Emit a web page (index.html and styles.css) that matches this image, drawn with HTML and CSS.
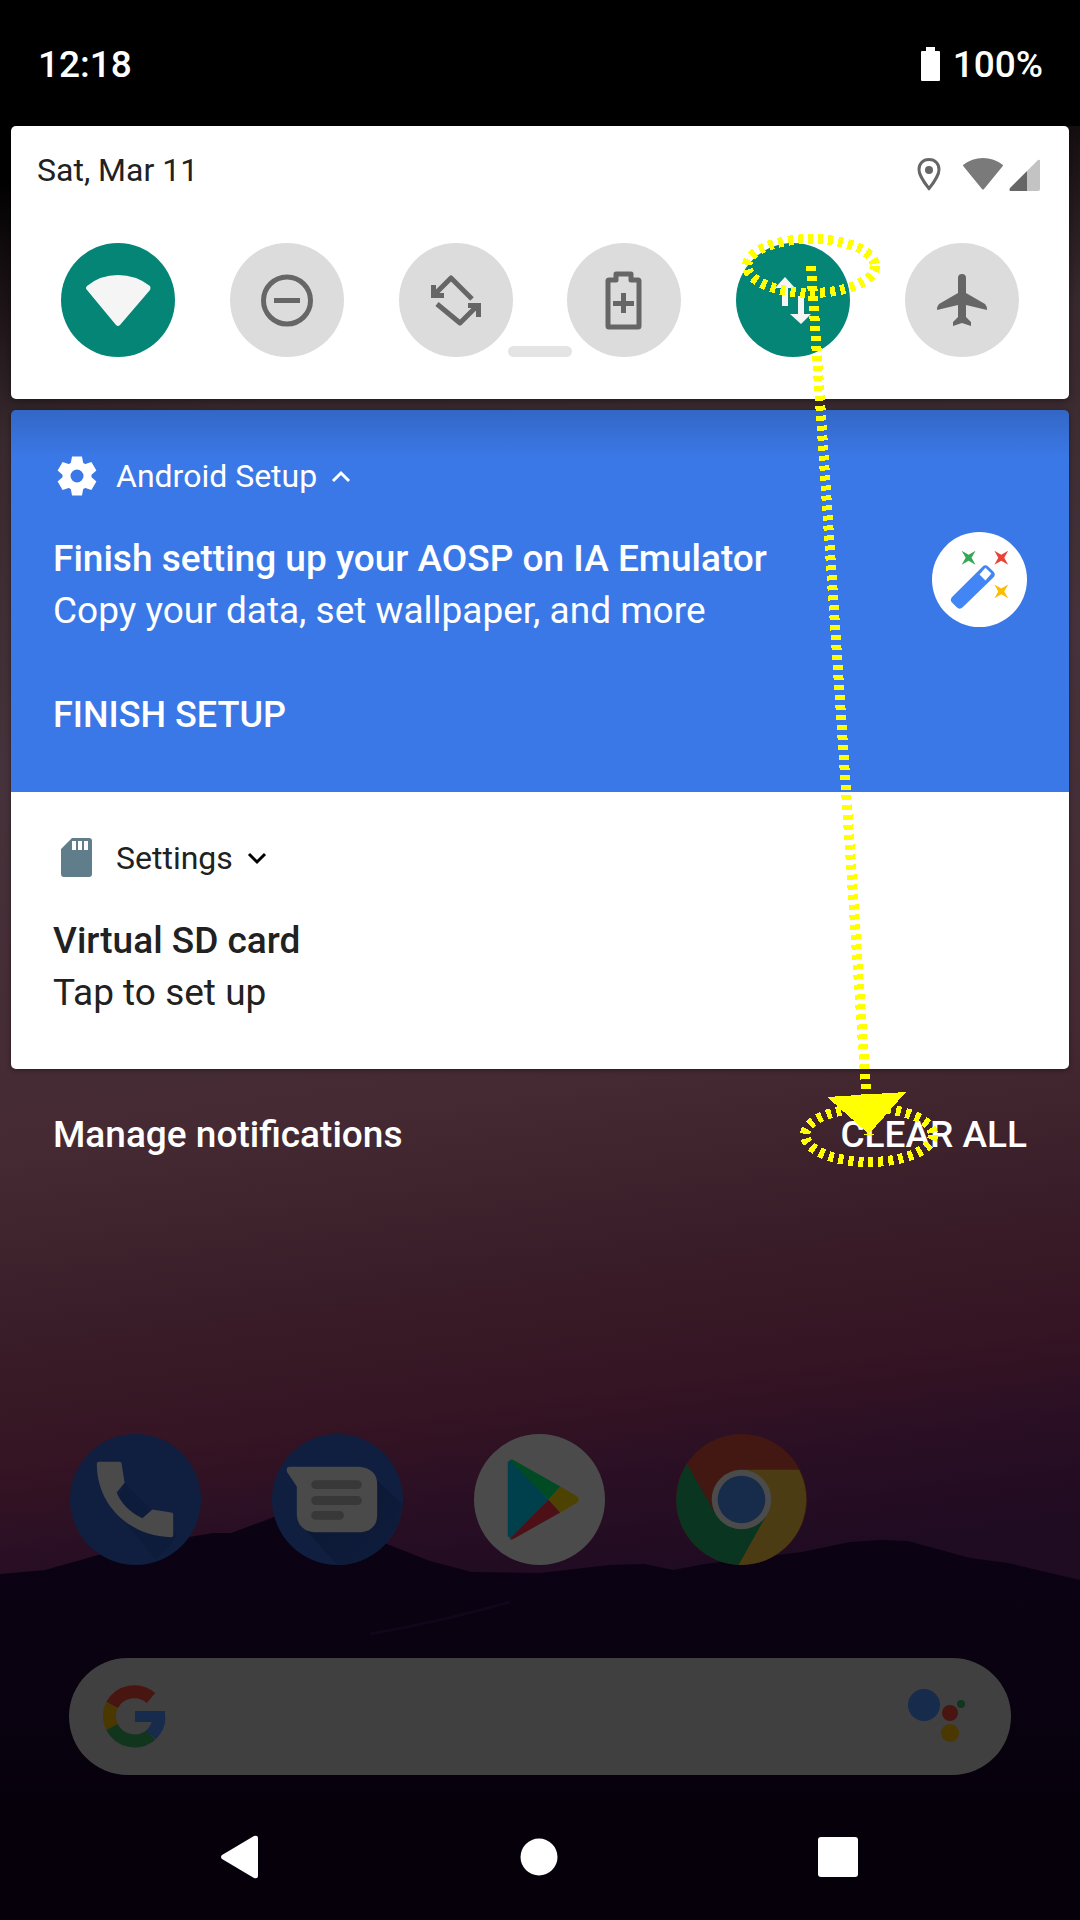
FILE: index.html
```html
<!DOCTYPE html>
<html lang="en">
<head>
<meta charset="utf-8">
<meta name="viewport" content="width=device-width, initial-scale=1">
<title>Notification shade</title>
<link rel="stylesheet" href="styles.css">
</head>
<body>
<div class="screen">
  <svg class="wallpaper" viewBox="0 0 1080 1920" preserveAspectRatio="none" aria-hidden="true">
    <defs>
      <linearGradient id="sky" gradientUnits="userSpaceOnUse" x1="350" y1="126" x2="540" y2="1590">
        <stop offset="0" stop-color="#000"/>
        <stop offset="0.08" stop-color="#1a1215"/>
        <stop offset="0.18" stop-color="#38292e"/>
        <stop offset="0.4" stop-color="#45323a"/>
        <stop offset="0.66" stop-color="#452a33"/>
        <stop offset="0.78" stop-color="#391d28"/>
        <stop offset="0.87" stop-color="#351423"/>
        <stop offset="0.93" stop-color="#2a0f24"/>
        <stop offset="1" stop-color="#1f0b22"/>
      </linearGradient>
      <linearGradient id="hill" x1="0" y1="0" x2="0" y2="1">
        <stop offset="0" stop-color="#0b0213"/>
        <stop offset="0.4" stop-color="#0a0211"/>
        <stop offset="0.75" stop-color="#06000b"/>
        <stop offset="1" stop-color="#050009"/>
      </linearGradient>
      <linearGradient id="cast" x1="0" y1="0" x2="1" y2="1">
        <stop offset="0" stop-color="#0a1732"/>
        <stop offset="1" stop-color="#0f1d3d"/>
      </linearGradient>
    </defs>
    <rect width="1080" height="1920" fill="url(#sky)"/>
    <path fill="url(#hill)" d="M0 1574L45 1570L98 1555L140 1545L189 1537L213 1533L231 1533L274 1517L310 1512L350 1526L387 1544L430 1561L472 1572L540 1573L609 1565L645 1564L673 1570L704 1564L802 1552L850 1542L880 1540L908 1541L970 1558L1008 1563L1080 1580V1920H0Z"/>
    <path fill="none" stroke="#10071a" stroke-width="3" d="M370 1634Q440 1622 510 1602"/>
  </svg>

  <header class="status">
    <time>12:18</time>
    <span class="battery">
      <svg width="20" height="34" viewBox="0 0 20 34" aria-hidden="true"><path fill="#fff" d="M5 0H14V4H18Q19 4 19 5V33Q19 34 18 34H1Q0 34 0 33V5Q0 4 1 4H5Z"/></svg>
      100%
    </span>
  </header>

  <main class="shade">
    <section class="panel" aria-label="Quick settings">
      <div class="panel-head">
        <span class="date">Sat, Mar 11</span>
        <svg class="indicators" width="126" height="36" viewBox="0 0 126 36" aria-hidden="true">
          <path fill="none" stroke="#666" stroke-width="3" d="M13 2.500C6.500 2.500 3 7 3 12.500C3 19.500 13 31.500 13 31.500S23 19.500 23 12.500C23 7 19.500 2.500 13 2.500Z"/>
          <circle cx="13" cy="13" r="4" fill="#666"/>
          <path fill="#7a7a7a" d="M47 8Q56 1 67 1T87 8Q87 9 86 10L68 32Q67 33 66 32L48 10Q47 9 47 8Z"/>
          <path fill="#c3c3c3" d="M111 14L122 3Q124 2 124 4V32Q124 34 122 34H111Z"/>
          <path fill="#666" d="M111 14V34H94Q93 33 94 31Z"/>
        </svg>
      </div>
      <div class="tiles">
        <button class="tile on" type="button" aria-label="Wi-Fi">
          <svg viewBox="0 0 114 114"><path fill="#f5f5f5" d="M26 43Q39 32 57 32T89 43Q90 45 89 47L59 82Q57 84 55 82L26 47Q24 45 26 43Z"/></svg>
        </button>
        <button class="tile" type="button" aria-label="Do not disturb">
          <svg viewBox="0 0 114 114"><circle cx="57" cy="57.500" r="23.500" fill="none" stroke="#666" stroke-width="5"/><path fill="#666" d="M44 55H70V60H44Z"/></svg>
        </button>
        <button class="tile" type="button" aria-label="Auto-rotate">
          <svg viewBox="0 0 114 114"><path fill="none" stroke="#666" stroke-width="5" stroke-linejoin="round" d="M73 56L52 35L37 50M38 61L61 80L77 64"/><path fill="#666" d="M32 42H37V47L40 50H45V55H32ZM82 74H77V68L74 65H69V60H82Z"/></svg>
        </button>
        <button class="tile" type="button" aria-label="Battery saver">
          <svg viewBox="0 0 114 114"><path fill="none" stroke="#666" stroke-width="5" stroke-linejoin="round" d="M42 37H49V31H64V37H71Q72 37 72 38V83Q72 84 71 84H42Q41 84 41 83V38Q41 37 42 37Z"/><path fill="#666" d="M54 50H59V58H67V63H59V70H54V63H46V58H54Z"/></svg>
        </button>
        <button class="tile on" type="button" aria-label="Mobile data">
          <svg viewBox="0 0 114 114"><path fill="#f5f5f5" d="M49 34L59 45H52V63H46V45H39ZM62 53H68V71H75L65 81L54 71H62Z"/></svg>
        </button>
        <button class="tile" type="button" aria-label="Airplane mode">
          <svg viewBox="0 0 114 114"><path fill="#666" d="M57 31Q61 31 61 35V50L80 61Q82 63 82 67L61 62V74L66 79V83L57 80L48 83V79L53 74V62L32 67Q32 63 34 61L53 50V35Q53 31 57 31Z"/></svg>
        </button>
      </div>
      <span class="handle"></span>
    </section>

    <section class="cards" aria-label="Notifications">
      <article class="card setup">
        <button class="card-head" type="button">
          <svg class="app-icon" width="48" height="48" viewBox="0 0 48 48" aria-hidden="true">
            <circle cx="24" cy="24" r="10.500" fill="none" stroke="#fff" stroke-width="8"/>
            <g fill="#fff">
              <path d="M19 4.500H29L30.500 13H17.500Z"/>
              <path d="M19 4.500H29L30.500 13H17.500Z" transform="rotate(60 24 24)"/>
              <path d="M19 4.500H29L30.500 13H17.500Z" transform="rotate(120 24 24)"/>
              <path d="M19 4.500H29L30.500 13H17.500Z" transform="rotate(180 24 24)"/>
              <path d="M19 4.500H29L30.500 13H17.500Z" transform="rotate(240 24 24)"/>
              <path d="M19 4.500H29L30.500 13H17.500Z" transform="rotate(300 24 24)"/>
            </g>
          </svg>
          <span>Android Setup</span>
          <svg class="chevron" width="20" height="14" viewBox="0 0 20 14" aria-hidden="true"><path fill="none" stroke="#fff" stroke-width="3" d="M2 12L10 4L18 12"/></svg>
        </button>
        <div class="card-body">
          <div>
            <h2>Finish setting up your AOSP on IA Emulator</h2>
            <p>Copy your data, set wallpaper, and more</p>
          </div>
          <svg class="wand" width="95" height="95" viewBox="0 0 96 96" aria-hidden="true">
            <circle cx="48" cy="48" r="48" fill="#fff"/>
            <path fill="#4285f4" fill-rule="evenodd" d="M20 66L51 35Q54 32 57 35L62 40Q65 43 62 46L31 76Q28 79 25 76L20 71Q18 69 20 66ZM54 36L48 43L54 49L60 42Z"/>
            <path fill="#34a853" d="M30 19L37 23L44 19L40 26L44 33L37 29L30 33L34 26Z"/>
            <path fill="#ea4335" d="M63 19L70 23L77 19L73 26L77 33L70 29L63 33L67 26Z"/>
            <path fill="#fbbc05" d="M63 53L70 57L77 53L73 60L77 67L70 63L63 67L67 60Z"/>
          </svg>
        </div>
        <button class="action" type="button">FINISH SETUP</button>
      </article>
      <article class="card">
        <button class="card-head" type="button">
          <svg class="app-icon" width="48" height="48" viewBox="0 0 48 48" aria-hidden="true"><path fill="#607d8b" fill-rule="evenodd" d="M19 4H36Q39 4 39 7V40Q39 43 36 43H11Q8 43 8 40V15ZM19 7V16H23V7ZM25 7V16H29V7ZM31 7V16H35V7Z"/></svg>
          <span>Settings</span>
          <svg class="chevron" width="20" height="14" viewBox="0 0 20 14" aria-hidden="true"><path fill="none" stroke="#000" stroke-width="3" d="M2 3L10 11L18 3"/></svg>
        </button>
        <div class="card-body">
          <div>
            <h2>Virtual SD card</h2>
            <p>Tap to set up</p>
          </div>
        </div>
      </article>
    </section>

    <div class="shade-foot">
      <button type="button">Manage notifications</button>
      <button type="button">CLEAR ALL</button>
    </div>
  </main>

  <footer class="home">
    <nav class="dock" aria-label="Favourite apps">
      <a href="#" aria-label="Phone">
        <svg viewBox="0 0 132 132"><circle cx="66" cy="66" r="66" fill="#101f40"/><path fill="#0e1c3b" d="M55 49L108 102Q98 118 86 126L44 75Z"/><path fill="#4a4a4a" d="M29 28H50Q52 28 52 30L55 49L47 59Q54 76 73 85L83 76L102 79Q104 79 104 81V102Q104 104 102 104C60 103 27 72 27 30Q27 28 29 28Z"/></svg>
      </a>
      <a href="#" aria-label="Messages">
        <svg viewBox="0 0 132 132"><circle cx="66" cy="66" r="66" fill="#101f40"/><path fill="url(#cast)" d="M104 45L131 70A66 66 0 0 1 66 132L34 97Z"/><path fill="#4a4a4a" d="M18 33H88Q106 35 106 51V81Q106 97 90 99H42Q26 97 25 81V53L15 38Q14 33 18 33Z"/><path stroke="#383838" stroke-width="9" stroke-linecap="round" d="M44 51H86M44 67H86M44 82H68"/></svg>
      </a>
      <a href="#" aria-label="Play Store">
        <svg viewBox="0 0 132 132"><circle cx="66" cy="66" r="66" fill="#4b4b4b"/><path fill="#00404c" d="M34 29Q34 26 38 27L75 66L38 105Q34 105 34 102Z"/><path fill="#004a24" d="M36 26Q38 25 41 27L87 53L75 66Z"/><path fill="#4d1017" d="M36 106Q38 107 41 105L87 79L75 66Z"/><path fill="#4e4200" d="M87 53L104 63Q107 66 104 69L87 79L75 66Z"/></svg>
      </a>
      <a href="#" aria-label="Chrome">
        <svg viewBox="0 0 132 132"><circle cx="66" cy="66" r="66" fill="#431812"/><path fill="#0a3520" d="M11 30A66 66 0 0 0 63 132L92 82L40 81Z"/><path fill="#4c3c14" d="M66 36H124A66 66 0 0 1 63 132L91 82Z"/><circle cx="66" cy="66" r="30" fill="#4b4b4b"/><circle cx="66" cy="66" r="24" fill="#172b4b"/></svg>
      </a>
    </nav>
    <button class="search" type="button" aria-label="Search">
      <svg width="64" height="64" viewBox="0 0 64 64" fill="none" stroke-width="13">
        <path stroke="#481510" d="M48 14A25.500 25.500 0 0 0 9 21"/>
        <path stroke="#4a3800" d="M9 21A25.500 25.500 0 0 0 9 43"/>
        <path stroke="#12351d" d="M9 43A25.500 25.500 0 0 0 48 51"/>
        <path stroke="#172b4d" d="M48 51Q56 43 56 33"/>
        <path fill="#172b4d" d="M32 27H62V38H32Z"/>
      </svg>
      <svg width="58" height="54" viewBox="0 0 58 54"><circle cx="16" cy="16" r="16" fill="#172b4d"/><circle cx="42" cy="24" r="8" fill="#481510"/><circle cx="53" cy="15" r="4" fill="#12351d"/><circle cx="42" cy="44" r="9" fill="#4a3800"/></svg>
    </button>
    <nav class="navbar" aria-label="System navigation">
      <button type="button" aria-label="Back"><svg viewBox="0 0 44 44"><path fill="#fff" d="M4 20L36 1Q40 0 40 3V41Q40 44 36 43L4 24Q2 22 4 20Z"/></svg></button>
      <button type="button" aria-label="Home"><svg viewBox="0 0 44 44"><circle cx="22" cy="22" r="18.500" fill="#fff"/></svg></button>
      <button type="button" aria-label="Recent apps"><svg viewBox="0 0 44 44"><rect x="2" y="2" width="40" height="40" rx="3" fill="#fff"/></svg></button>
    </nav>
  </footer>

  <svg class="gesture" viewBox="0 0 1080 1920" aria-hidden="true">
    <g fill="none" stroke="#ff0" stroke-width="10" stroke-dasharray="5" shape-rendering="crispEdges">
      <ellipse cx="811" cy="266" rx="64" ry="27"/>
      <ellipse cx="869" cy="1135" rx="64" ry="27"/>
      <path d="M811 266L869 1135"/>
      <path d="M827 1097L906 1092L869 1134Z" fill="#ff0" stroke="none"/>
    </g>
  </svg>
</div>
</body>
</html>
```
FILE: styles.css
```css
* {
  box-sizing: border-box;
}

body {
  margin: 0;
  background: #000;
  color: #212121;
  font-family: Roboto, "Noto Sans", sans-serif;
  font-size: 37px;
}

button {
  margin: 0;
  padding: 0;
  border: 0;
  background: none;
  color: inherit;
  font: inherit;
  cursor: pointer;
}

svg {
  display: block;
}

h2,
p {
  margin: 0;
  font-size: 37px;
  line-height: 52px;
  font-weight: 400;
}

h2 {
  font-weight: 500;
}

.screen {
  position: relative;
  display: flex;
  flex-direction: column;
  min-height: 100vh;
  overflow: hidden;
}

.wallpaper {
  position: absolute;
  inset: 0;
  width: 100%;
  height: 100%;
}

.gesture {
  position: absolute;
  top: 0;
  left: 0;
  width: 100%;
  pointer-events: none;
}

.status,
.shade,
.home {
  position: relative;
}

.status {
  display: flex;
  align-items: center;
  justify-content: space-between;
  height: 126px;
  padding: 2px 37px 0 38px;
  background: #000;
  color: #fff;
  font-weight: 500;
}

.battery {
  display: flex;
  align-items: center;
  gap: 12px;
}

.shade {
  display: flex;
  flex-direction: column;
  gap: 11px;
  padding: 0 11px;
}

.panel {
  position: relative;
  height: 273px;
  border-radius: 5px;
  background: #fff;
  box-shadow: 0 2px 8px rgba(0, 0, 0, 0.4);
}

.panel-head {
  display: flex;
  justify-content: space-between;
  padding: 24px 27px 0 26px;
}

.date {
  font-size: 32px;
  line-height: 40px;
}

.indicators {
  margin-top: 7px;
}

.tiles {
  display: flex;
  justify-content: space-between;
  padding: 50px 50px 0;
}

.tile {
  width: 114px;
  height: 114px;
  border-radius: 50%;
  background: #dcdcdc;
}

.tile.on {
  background: #048576;
}

.handle {
  position: absolute;
  top: 220px;
  left: 50%;
  width: 64px;
  height: 11px;
  margin-left: -32px;
  border-radius: 6px;
  background: #e4e4e4;
}

.cards {
  overflow: hidden;
  border-radius: 5px;
  box-shadow: 0 1px 5px rgba(0, 0, 0, 0.4);
}

.card {
  min-height: 277px;
  padding: 42px 42px 0;
  background: #fff;
}

.card.setup {
  min-height: 382px;
  background: linear-gradient(#3367c5, #3b78e7 48px);
  color: #fff;
}

.card-head {
  display: flex;
  align-items: center;
  height: 48px;
  font-size: 32px;
}

.app-icon {
  margin-right: 15px;
}

.chevron {
  margin-left: 14px;
}

.card-body {
  display: flex;
  justify-content: space-between;
  margin-top: 32px;
}

.card-body h2 {
  padding-top: 1px;
}

.action {
  margin-top: 52px;
  font-size: 36px;
  font-weight: 500;
  line-height: 52px;
}

.shade-foot {
  display: flex;
  justify-content: space-between;
  margin-top: 29px;
  padding: 0 42px;
  color: #fff;
  font-weight: 500;
  line-height: 52px;
}

.shade-foot button {
  line-height: inherit;
}

.home {
  margin-top: auto;
}

.dock {
  display: grid;
  grid-template-columns: repeat(5, 1fr);
  justify-items: center;
  padding: 0 36px 0 34px;
}

.dock svg {
  width: 131px;
}

.search {
  display: flex;
  align-items: center;
  justify-content: space-between;
  width: calc(100% - 138px);
  height: 117px;
  margin: 93px 69px 0;
  padding: 0 45px 2px 34px;
  border-radius: 59px;
  background: #404041;
}

.navbar {
  display: flex;
  justify-content: center;
  gap: 255px;
  padding: 60px 2px 41px 0;
}

.navbar svg {
  width: 44px;
}
```
